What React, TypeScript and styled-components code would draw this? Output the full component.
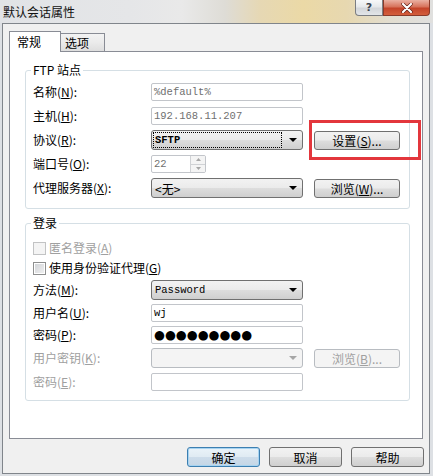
import React from 'react'
import styled, { createGlobalStyle } from 'styled-components'

const cjk = `"Noto Sans CJK SC", "Liberation Sans", sans-serif`
const mono = `"Liberation Mono", "DejaVu Sans Mono", monospace`
const winGrad = 'linear-gradient(#f2f2f2 0%, #ebebeb 48%, #dddddd 52%, #cfcfcf 100%)'

const GlobalStyle = createGlobalStyle`
    html, body {
        margin:0;
        padding:0;
    }
    body {
        width:433px;
        height:476px;
        overflow:hidden;
        background:#dde0e4;
        font-family:${cjk};
        font-size:12px;
        color:#000;
    }
`

const Window = styled.div`
    width:433px;
    height:476px;
    display:flex;
    flex-direction:column;
    background:#dde0e4;
`

const TitleBar = styled.div`
    height:23px;
    flex:none;
    display:flex;
    justify-content:space-between;
    align-items:flex-start;
    background:linear-gradient(90deg, #e1e3e6 0%, #e5e6e8 30%, #e9e9e9 42%, #dedcd6 52%,
        #e6d8b4 60%, #ebd9a6 70%, #e7d8b0 80%, #e2ddd0 90%, #e0e0df 100%);
`

const Title = styled.span`
    padding-left:3px;
    line-height:23px;
    font-size:12px;
    color:#111;
`

const Caption = styled.div`
    display:flex;
    margin-right:3px;
`

const CaptionBtn = styled.div<{$close?:boolean}>`
    width:${p=>p.$close?47:28}px;
    height:16px;
    box-sizing:border-box;
    border:1px solid ${p=>p.$close?'#8a3a2a':'#7a7d82'};
    border-top:none;
    border-radius:${p=>p.$close?'0 0 4px 0':'0 0 0 4px'};
    background:${p=>p.$close
        ?'linear-gradient(#eab1a3 0%, #d7735c 45%, #c4442a 55%, #d35e3c 100%)'
        :'linear-gradient(#f7f8f9 0%, #e6e8ea 45%, #d3d6da 55%, #e2e5e8 100%)'};
    display:flex;
    justify-content:center;
    align-items:center;
    font-family:"DejaVu Sans", sans-serif;
    font-weight:bold;
    font-size:11px;
    color:#3b4350;
`

const Client = styled.div`
    flex:1;
    margin:0 3px 2px 2px;
    border:1px solid #80858b;
    background:#f0f0f0;
    display:flex;
    flex-direction:column;
`

const TabStrip = styled.div`
    height:20px;
    padding:7px 0 0 6px;
    display:flex;
    align-items:flex-end;
`

const Tab = styled.div<{$active?:boolean}>`
    position:relative;
    box-sizing:border-box;
    width:${p=>p.$active?52:45}px;
    height:${p=>p.$active?21:18}px;
    margin-bottom:${p=>p.$active?-1:0}px;
    margin-left:${p=>p.$active?0:-1}px;
    z-index:${p=>p.$active?1:0};
    border:1px solid #898c95;
    border-bottom:none;
    background:${p=>p.$active?'#fff':'linear-gradient(#f3f3f3 0%, #ebebeb 50%, #dedede 100%)'};
    padding:${p=>p.$active?'3px 0 0 7px':'2px 0 0 4px'};
    line-height:14px;
    font-size:12px;
`

const Panel = styled.div`
    height:388px;
    box-sizing:border-box;
    margin:0 6px;
    border:1px solid #898c95;
    background:#fff;
    padding:18px 12px 0 15px;
    display:flex;
    flex-direction:column;
    gap:14px;
`

const Group = styled.div<{$pad:string}>`
    position:relative;
    border:1px solid #d5dfe5;
    border-radius:3px;
    padding:${p=>p.$pad};
`

const GroupTitle = styled.span`
    position:absolute;
    top:-8px;
    left:5px;
    padding:0 2px;
    background:#fff;
    line-height:14px;
    font-size:12px;
`

const Row = styled.div<{$h?:number}>`
    height:${p=>p.$h??24}px;
    display:grid;
    grid-template-columns:107px 152px 86px;
    column-gap:11px;
    align-items:center;
`

const Label = styled.span<{$off?:boolean}>`
    font-size:12px;
    line-height:14px;
    white-space:nowrap;
    color:${p=>p.$off?'#a0a0a0':'#000'};
`

const Key = styled.span`
    text-decoration:underline;
    text-underline-offset:1px;
`

const TextBox = styled.div<{$w?:number; $dim?:boolean}>`
    width:${p=>p.$w??152}px;
    height:18px;
    box-sizing:border-box;
    border:1px solid #c2c5ca;
    border-radius:2px;
    background:#fff;
    display:flex;
    align-items:center;
    padding-left:2px;
    font-family:${mono};
    font-size:10.5px;
    color:${p=>p.$dim?'#6f6f6f':'#000'};
    overflow:hidden;
`

const Spin = styled.div`
    margin-left:auto;
    width:15px;
    height:16px;
    box-sizing:border-box;
    border-left:1px solid #d0d2d5;
    display:flex;
    flex-direction:column;
    background:#f4f4f4;
`

const SpinHalf = styled.div`
    flex:1;
    display:flex;
    justify-content:center;
    align-items:center;
    & + & {
        border-top:1px solid #d0d2d5;
    }
`

const Dots = styled.span`
    font-family:"DejaVu Sans", sans-serif;
    font-size:12.5px;
    letter-spacing:0;
    line-height:16px;
    color:#000;
`

const Combo = styled.div<{$off?:boolean}>`
    width:152px;
    height:20px;
    box-sizing:border-box;
    border:1px solid ${p=>p.$off?'#b8bcc1':'#707070'};
    border-radius:3px;
    background:${p=>p.$off?'#f4f4f4':winGrad};
    display:flex;
    align-items:center;
    padding:0 5px 0 1px;
    gap:7px;
`

const ComboText = styled.span<{$focus?:boolean; $cjk?:boolean}>`
    flex:1;
    height:16px;
    box-sizing:border-box;
    display:flex;
    align-items:center;
    padding-left:2px;
    outline:${p=>p.$focus?'1px dotted #000':'none'};
    outline-offset:-1px;
    font-family:${p=>p.$cjk?cjk:mono};
    font-size:${p=>p.$cjk?'12px':'10.5px'};
    font-weight:${p=>p.$focus?'bold':'normal'};
`

const Btn = styled.div<{$off?:boolean; $def?:boolean; $w?:number; $h?:number}>`
    position:relative;
    width:${p=>p.$w??86}px;
    height:${p=>p.$h??19}px;
    box-sizing:border-box;
    border:1px solid ${p=>p.$off?'#b8bcc1':p.$def?'#3c7fb1':'#707070'};
    border-radius:3px;
    background:${p=>p.$off?'#f4f4f4'
        :p.$def?'linear-gradient(#eaf3f9 0%, #e0ebf3 48%, #cddcea 52%, #c4d6e6 100%)':winGrad};
    box-shadow:${p=>p.$def?'inset 0 0 0 1px #a6d3f1':'none'};
    display:flex;
    justify-content:center;
    align-items:center;
    font-size:12px;
    color:${p=>p.$off?'#a0a0a0':'#000'};
    white-space:nowrap;
`

const Highlight = styled.span`
    position:absolute;
    left:-6px;
    top:-12px;
    width:112px;
    height:40px;
    box-sizing:border-box;
    border:3px solid #e3363c;
    pointer-events:none;
`

const CheckRow = styled.div<{$off?:boolean}>`
    height:20px;
    display:flex;
    align-items:center;
    gap:3px;
    color:${p=>p.$off?'#a0a0a0':'#000'};
    font-size:12px;
    line-height:14px;
`

const CheckBox = styled.span<{$off?:boolean}>`
    width:13px;
    height:13px;
    box-sizing:border-box;
    border:1px solid ${p=>p.$off?'#c2c3c4':'#8e8f8f'};
    background:${p=>p.$off?'#f4f4f4':'linear-gradient(135deg, #cfd2d6 0%, #f2f2f2 100%)'};
    box-shadow:inset 0 0 0 1px ${p=>p.$off?'#f4f4f4':'#fff'};
`

const Footer = styled.div`
    display:flex;
    justify-content:flex-end;
    gap:9px;
    padding:8px 5px 0 0;
`

const Arrow = ({ off }:{ off?:boolean }) => (
    <svg width="8" height="4" viewBox="0 0 8 4">
        <path d="M0 0h8L4 4z" fill={off?'#a6a6a6':'#000'}/>
    </svg>
)

const SpinArrow = ({ up }:{ up?:boolean }) => (
    <svg width="5" height="3" viewBox="0 0 5 3">
        <path d={up?'M0 3h5L2.5 0z':'M0 0h5L2.5 3z'} fill="#a6a6a6"/>
    </svg>
)

const App:React.FC = () => {
    return (
        <Window>
            <GlobalStyle/>
            <TitleBar>
                <Title>默认会话属性</Title>
                <Caption>
                    <CaptionBtn>?</CaptionBtn>
                    <CaptionBtn $close>
                        <svg width="12" height="10" viewBox="0 0 12 10">
                            <path d="M2 1l8 8M10 1l-8 8" stroke="#5a1a10" strokeWidth="3.4" strokeLinecap="round"/>
                            <path d="M2 1l8 8M10 1l-8 8" stroke="#fff" strokeWidth="2.2" strokeLinecap="round"/>
                        </svg>
                    </CaptionBtn>
                </Caption>
            </TitleBar>
            <Client>
                <TabStrip>
                    <Tab $active>常规</Tab>
                    <Tab>选项</Tab>
                </TabStrip>
                <Panel>
                    <Group $pad='9px 0 8px 7px'>
                        <GroupTitle>FTP 站点</GroupTitle>
                        <Row>
                            <Label>名称(<Key>N</Key>):</Label>
                            <TextBox $dim>%default%</TextBox>
                        </Row>
                        <Row>
                            <Label>主机(<Key>H</Key>):</Label>
                            <TextBox $dim>192.168.11.207</TextBox>
                        </Row>
                        <Row>
                            <Label>协议(<Key>R</Key>):</Label>
                            <Combo>
                                <ComboText $focus>SFTP</ComboText>
                                <Arrow/>
                            </Combo>
                            <Btn>
                                设置(<Key>S</Key>)...
                                <Highlight/>
                            </Btn>
                        </Row>
                        <Row>
                            <Label>端口号(<Key>O</Key>):</Label>
                            <TextBox $w={55} $dim>
                                22
                                <Spin>
                                    <SpinHalf><SpinArrow up/></SpinHalf>
                                    <SpinHalf><SpinArrow/></SpinHalf>
                                </Spin>
                            </TextBox>
                        </Row>
                        <Row>
                            <Label>代理服务器(<Key>X</Key>):</Label>
                            <Combo>
                                <ComboText $cjk>&lt;无&gt;</ComboText>
                                <Arrow/>
                            </Combo>
                            <Btn>浏览(<Key>W</Key>)...</Btn>
                        </Row>
                    </Group>
                    <Group $pad='14px 0 7px 7px'>
                        <GroupTitle>登录</GroupTitle>
                        <CheckRow $off>
                            <CheckBox $off/>
                            <span>匿名登录(<Key>A</Key>)</span>
                        </CheckRow>
                        <CheckRow>
                            <CheckBox/>
                            <span>使用身份验证代理(<Key>G</Key>)</span>
                        </CheckRow>
                        <Row>
                            <Label>方法(<Key>M</Key>):</Label>
                            <Combo>
                                <ComboText>Password</ComboText>
                                <Arrow/>
                            </Combo>
                        </Row>
                        <Row $h={22}>
                            <Label>用户名(<Key>U</Key>):</Label>
                            <TextBox>wj</TextBox>
                        </Row>
                        <Row $h={22}>
                            <Label>密码(<Key>P</Key>):</Label>
                            <TextBox><Dots>●●●●●●●●●</Dots></TextBox>
                        </Row>
                        <Row>
                            <Label $off>用户密钥(<Key>K</Key>):</Label>
                            <Combo $off>
                                <ComboText/>
                                <Arrow off/>
                            </Combo>
                            <Btn $off>浏览(<Key>B</Key>)...</Btn>
                        </Row>
                        <Row $h={23}>
                            <Label $off>密码(<Key>E</Key>):</Label>
                            <TextBox/>
                        </Row>
                    </Group>
                </Panel>
                <Footer>
                    <Btn $def $w={73} $h={20}>确定</Btn>
                    <Btn $w={73} $h={20}>取消</Btn>
                    <Btn $w={73} $h={20}>帮助</Btn>
                </Footer>
            </Client>
        </Window>
    )
}

export default App
